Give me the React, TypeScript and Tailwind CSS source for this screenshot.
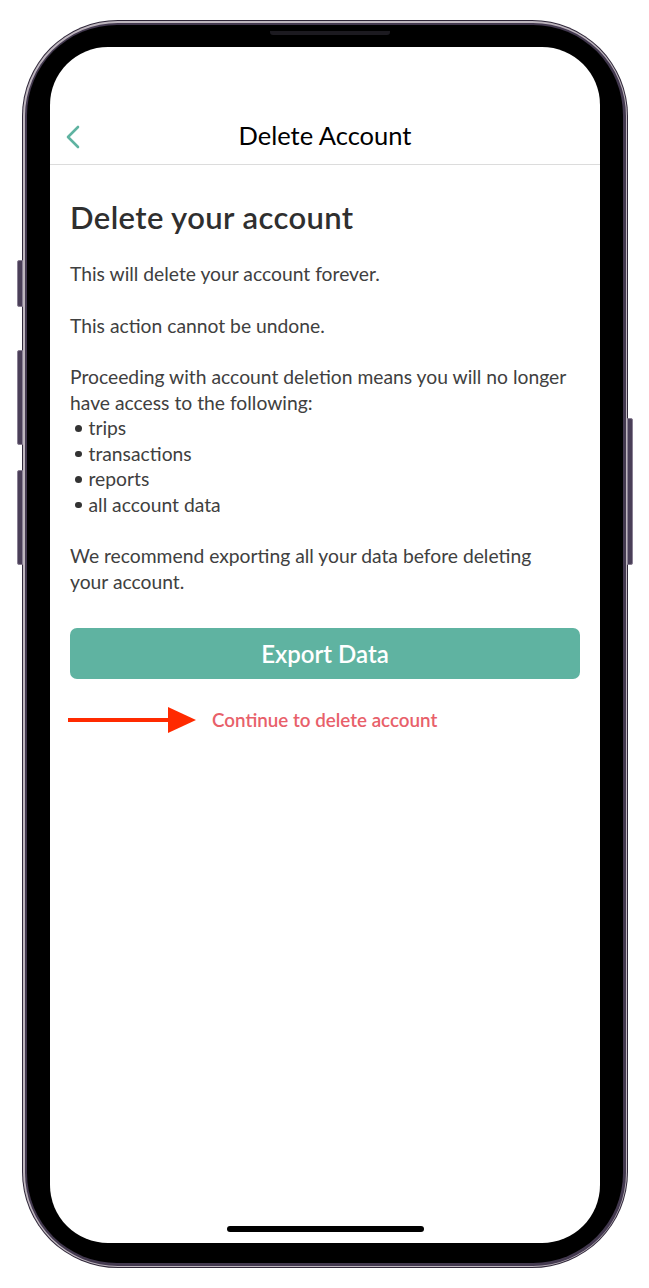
export default function App() {
  const items = ['trips', 'transactions', 'reports', 'all account data'];

  return (
    <div className="w-[649px] h-[1288px] bg-white pt-[20px] pl-[22px]" style={{ fontFamily: 'Lato, "Open Sans", sans-serif' }}>
      <div className="relative w-[606px] h-[1248px]">
        {/* side buttons */}
        <div className="absolute left-[-5px] top-[240px] w-[6px] h-[47px] rounded-l-[2px] bg-[#4a3f58] border border-[#8a8094]" />
        <div className="absolute left-[-5px] top-[330px] w-[6px] h-[95px] rounded-l-[2px] bg-[#4a3f58] border border-[#8a8094]" />
        <div className="absolute left-[-5px] top-[450px] w-[6px] h-[95px] rounded-l-[2px] bg-[#4a3f58] border border-[#8a8094]" />
        <div className="absolute right-[-5px] top-[398px] w-[6px] h-[147px] rounded-r-[2px] bg-[#4a3f58] border border-[#8a8094]" />

        <div className="w-full h-full rounded-[96px] bg-[#2f2739] p-[1px]">
          <div className="w-full h-full rounded-[95px] bg-[#beb6be] p-[1.5px]">
            <div className="w-full h-full rounded-[93px] bg-[#43394f] p-[2.5px]">
              <div className="relative w-full h-full rounded-[90px] bg-black pt-[22px] pb-[20px] px-[23px]">
                {/* speaker */}
                <div className="absolute left-[243px] top-[6px] w-[120px] h-[4px] rounded-b-[3px] bg-[#1c1a20]" />
                <div className="w-full h-full rounded-[58px] bg-white overflow-hidden flex flex-col">
                  <div className="h-[63px]" />
                  <div className="relative h-[55px] flex items-center justify-center border-b border-[#dcdcdc]">
                    <svg className="absolute left-[14px] top-[14px]" width="18" height="26" viewBox="0 0 18 26" fill="none">
                      <path d="M14 3 L4 13 L14 23" stroke="#5fb3a1" strokeWidth="2.6" strokeLinecap="round" strokeLinejoin="round" />
                    </svg>
                    <span className="text-[25.5px] text-black leading-none mt-[-2px]">Delete Account</span>
                  </div>
                  <div className="px-[20px] pt-[34px] text-[19.3px] text-[#404040]">
                    <h1 className="text-[31px] font-semibold tracking-[0.4px] text-[#2f2f2f] leading-[36px] mb-[26px]">Delete your account</h1>
                    <p className="leading-[25.5px]">This will delete your account forever.</p>
                    <p className="leading-[25.5px] mt-[26px]">This action cannot be undone.</p>
                    <p className="leading-[25.5px] mt-[26px]">
                      Proceeding with account deletion means you will no longer have access to the following:
                    </p>
                    <ul className="leading-[25.5px]">
                      {items.map((item) => (
                        <li key={item} className="flex items-center pl-[5px]">
                          <span className="w-[6.5px] h-[6.5px] rounded-full bg-[#333] mr-[7px] mt-[1px]" />
                          {item}
                        </li>
                      ))}
                    </ul>
                    <p className="leading-[25.5px] mt-[26px] pr-[20px]">We recommend exporting all your data before deleting your account.</p>
                    <button className="mt-[34px] w-full h-[51px] rounded-[7px] bg-[#5fb3a1] text-white text-[24px] font-semibold">
                      Export Data
                    </button>
                    <div className="relative mt-[28px] flex items-center h-[26px]">
                      <svg className="absolute left-[-2px] top-[0px]" width="130" height="26" viewBox="0 0 130 26">
                        <rect x="0" y="11" width="104" height="4" fill="#ff2a00" />
                        <polygon points="100,0 128,13 100,26" fill="#ff2a00" />
                      </svg>
                      <span className="ml-[142px] text-[18.8px] font-semibold text-[#e8606a]">Continue to delete account</span>
                    </div>
                  </div>
                  <div className="flex-1" />
                  <div className="flex justify-center pb-[11px]">
                    <div className="w-[197px] h-[6px] rounded-full bg-black" />
                  </div>
                </div>
              </div>
            </div>
          </div>
        </div>
      </div>
    </div>
  );
}
